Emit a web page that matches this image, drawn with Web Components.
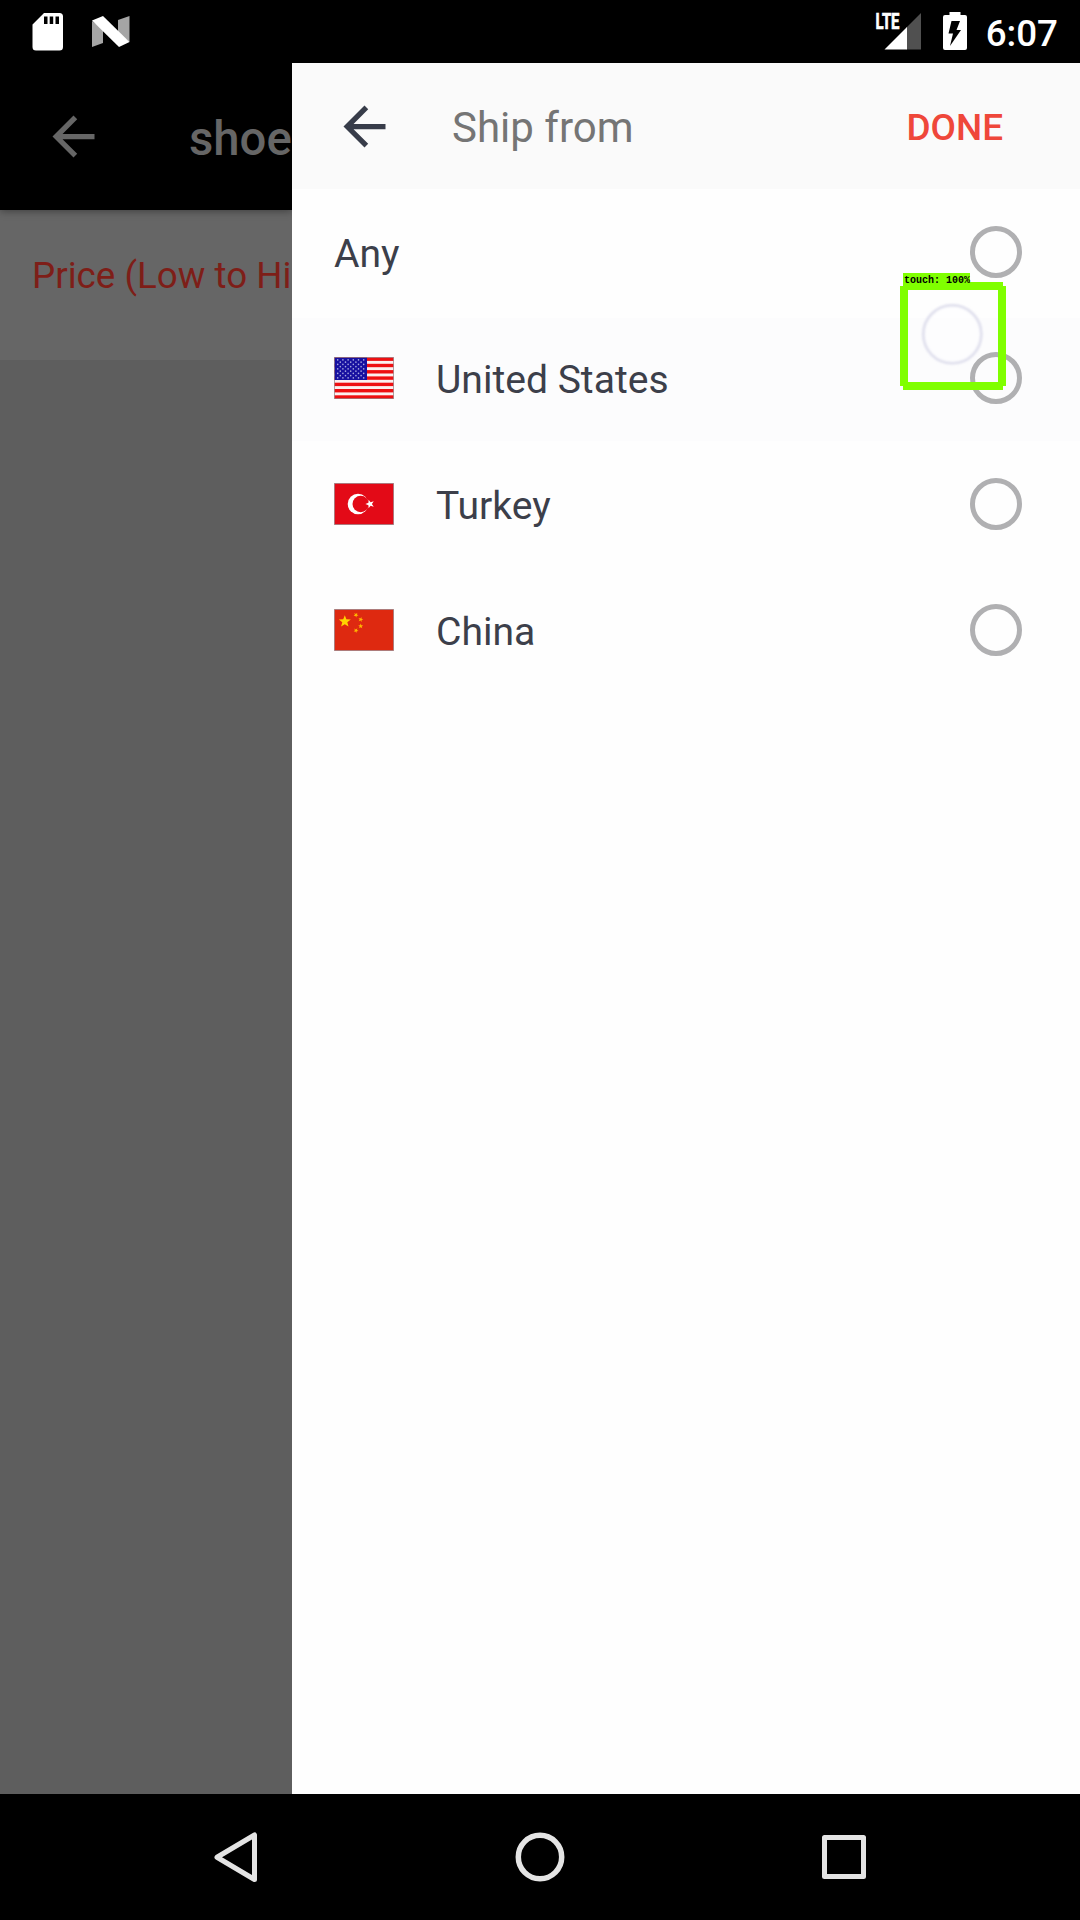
<!DOCTYPE html>
<html lang="en">
<head>
<meta charset="utf-8">
<title>Ship from</title>
<style>
html,body{margin:0;padding:0;background:#000}
body{font-family:Roboto,"Noto Sans",sans-serif;width:1080px;height:1920px;overflow:hidden}
</style>
</head>
<body>
<phone-screen></phone-screen>
<script>
const define = (name, css, html) => customElements.define(name, class extends HTMLElement {
  connectedCallback() {
    if (this.shadowRoot) return;
    const t = document.createElement('template');
    t.innerHTML = `<style>*{box-sizing:border-box}svg{display:block;flex:none}${css}</style>` +
      (typeof html === 'function' ? html(this) : html);
    this.attachShadow({mode: 'open'}).append(t.content.cloneNode(true));
  }
});

define('back-arrow', ':host{display:block;flex:none;width:63px;height:63px}',
  '<svg width="63" height="63" viewBox="0 0 24 24" fill="currentColor"><path d="M20 11H7.83l5.59-5.59L12 4l-8 8 8 8 1.41-1.41L7.83 13H20z"/></svg>');

define('status-bar', `
  :host{display:flex;height:63px;background:#000;color:#fff;padding:0 22px 0 32px;align-items:center}
  .right{margin-left:auto;display:flex;align-items:center}
  .sd{margin-right:29px}.sig{margin-right:22px}.bat{margin-right:19px}
  .time{font-size:36.75px;font-weight:500;line-height:43px;padding-top:3px}`, `
  <svg class="sd" width="31" height="63"><path fill="#fff" fill-rule="evenodd" d="M12 13h15.500q3.500 0 3.500 3.500V47q0 3.500-3.500 3.500H4Q.5 50.500.5 47V24.500zM12 16.500v7.500h3.500v-7.500zM17.700 16.500v7.500h3.500v-7.500zM23.500 16.500v7.500h3.500v-7.500z"/></svg>
  <svg width="38" height="63"><path fill="#a5a5a5" d="M0 21l11 8v14L0 47zM26 20l11.500-4v26L26 34z"/><path fill="#fff" d="M0 20.500L11 16l26.500 26L27 47z"/></svg>
  <div class="right">
    <svg class="sig" width="46" height="63"><path fill="#505050" d="M46 13v36.500H31.500V27.500z"/><path fill="#fff" d="M9.500 49.500L32 27v22.500z"/><path fill="#000" d="M0 10h24v19H0z"/><text x="0.500" y="29" textLength="24" lengthAdjust="spacingAndGlyphs" font-family="Roboto" font-weight="700" font-size="21.500" fill="#fff" stroke="#fff" stroke-width=".7">LTE</text></svg>
    <svg class="bat" width="24" height="63"><path fill="#fff" d="M6.500 12h11v3H22q2 0 2 2v31q0 2-2 2H2q-2 0-2-2V17q0-2 2-2h4.500z"/><path fill="#000" d="M8.500 21h8.500l-3.500 9H18L7 46l3-12.500H5.500z"/></svg>
    <span class="time">6:07</span>
  </div>`);

define('results-page', `
  :host{display:flex;flex-direction:column;width:292px;flex:none;overflow:hidden;background:#5e5e5e;white-space:nowrap}
  .bar{height:147px;background:#000;color:#666;display:flex;align-items:center;padding-left:42px;flex:none;z-index:1;box-shadow:0 1px 8px rgba(0,0,0,.4)}
  .title{font-size:47.250px;font-weight:500;line-height:56px;margin-left:84px;padding-top:4px}
  .sort{height:150px;background:#666;color:#7e1e18;font-size:36.750px;line-height:44px;padding:43.500px 0 0 32px;flex:none}`, `
  <div class="bar"><back-arrow></back-arrow><span class="title">shoe</span></div>
  <div class="sort">Price (Low to Hi</div>`);

const star = (cx, cy, r, rot = -90) => Array.from({length: 10}, (_, i) => {
  const a = (rot + i * 36) * Math.PI / 180, q = i % 2 ? r * .42 : r;
  return (cx + q * Math.cos(a)).toFixed(2) + ',' + (cy + q * Math.sin(a)).toFixed(2);
}).join(' ');

const flags = {
  us: () => {
    let s = '<rect width="59" height="41" fill="#fbf0f0"/>';
    for (let i = 0; i < 7; i++) s += `<rect y="${(i * 6.3).toFixed(1)}" width="59" height="3.4" fill="#ee0f12"/>`;
    s += '<rect width="32.500" height="22.500" fill="#1710a0"/>';
    for (let r = 0; r < 9; r++) for (let c = 0; c < (r % 2 ? 5 : 6); c++)
      s += `<circle cx="${3.2 + c * 5.2 + (r % 2 ? 2.6 : 0)}" cy="${2.4 + r * 2.25}" r=".8" fill="#a9a9e0"/>`;
    return s;
  },
  tr: () => `<rect width="59" height="41" fill="#e30a17"/><circle cx="23.500" cy="20.500" r="10.300" fill="#fff"/><circle cx="26.200" cy="20.500" r="8.200" fill="#e30a17"/><polygon points="${star(35.5, 20.5, 4.6, 180)}" fill="#fff"/>`,
  cn: () => `<rect width="59" height="41" fill="#de2910"/><polygon points="${star(10.3, 12, 6.3)}" fill="#ffd400"/>` +
    [[21.5, 5.5, -60], [26.2, 10, -75], [26.2, 16.700, -90], [21.5, 21, -60]].map(a => `<polygon points="${star(a[0], a[1], 2.6, a[2])}" fill="#ffb800"/>`).join('')
};
define('country-flag', ':host{display:block;flex:none;width:60px;height:42px;margin-right:42px}',
  el => `<svg width="60" height="42"><g transform="translate(.5 .5)">${flags[el.getAttribute('code')]()}<rect width="59" height="41" fill="none" stroke="#8a7074" stroke-opacity=".65"/></g></svg>`);

define('radio-ring', ':host{display:block;flex:none;width:52px;height:52px;border:5px solid #b0b0b2;border-radius:50%;box-sizing:border-box}', '');

define('country-row', `
  :host{display:flex;align-items:center;height:126px;padding:0 58px 0 42px;color:#3c3f4a;font-size:39.1px}
  :host([pressed]){background:linear-gradient(#fefefe 3px,#fcfcfd 3px)}
  .name{flex:1;line-height:46px;padding-top:3px}`,
  el => `${el.hasAttribute('flag') ? `<country-flag code="${el.getAttribute('flag')}"></country-flag>` : ''}<span class="name"><slot></slot></span><radio-ring></radio-ring>`);

define('filter-drawer', `
  :host{display:flex;flex-direction:column;flex:1;background:#fefefe;color:#3a3f4a}
  header{display:flex;align-items:center;height:126px;background:#fafafa;padding:0 77px 0 41px}
  back-arrow{color:#373c49}
  .title{font-size:42px;line-height:50px;color:#757575;margin-left:56px;padding-top:3px;flex:1}
  .done{font-size:36.900px;line-height:44px;font-weight:500;color:#ef473a;padding-top:3px}`, `
  <header><back-arrow></back-arrow><span class="title">Ship from</span><span class="done">DONE</span></header>
  <country-row>Any</country-row>
  <country-row flag="us" pressed>United States</country-row>
  <country-row flag="tr">Turkey</country-row>
  <country-row flag="cn">China</country-row>`);

define('nav-bar', `
  :host{display:flex;height:126px;background:#000;justify-content:center;align-items:center;gap:248px}`, `
  <svg width="56" height="56" fill="none" stroke="#e4e4e4" stroke-width="5" stroke-linejoin="round"><path d="M46.500 6v44.500L9 28.250z"/></svg>
  <svg width="56" height="56" fill="none" stroke="#e4e4e4" stroke-width="5.500"><circle cx="28" cy="28" r="21.700"/></svg>
  <svg width="56" height="56" fill="none" stroke="#e4e4e4" stroke-width="5" stroke-linejoin="round"><path d="M8.500 8.500h39v39h-39z"/></svg>`);

define('touch-marker', `
  :host{position:absolute;left:900px;top:273px;width:106px;height:117px}
  svg{position:absolute;left:0;top:0}
  .label{position:absolute;left:3px;top:0;width:67px;height:12px;background:#80ff00;color:#000;font:bold 10px/15px "Liberation Mono",monospace;padding-left:1px;white-space:pre}`, `
  <svg width="106" height="117"><defs><filter id="s" x="-30%" y="-30%" width="160%" height="160%"><feGaussianBlur stdDeviation="1"/></filter></defs>
  <circle cx="52.300" cy="61.300" r="29" fill="#fdfdff" fill-opacity=".5" stroke="#dedeec" stroke-width="2.600" filter="url(#s)"/>
  <path fill="#80ff00" fill-rule="evenodd" d="M3 9h100v4h3v100h-3v4H3v-4H0V13h3zM8 17v92h90V17z"/></svg>
  <span class="label">touch: 100%</span>`);

define('phone-screen', `
  :host{display:flex;flex-direction:column;width:1080px;height:1920px;position:relative;background:#000}
  main{display:flex;flex:1;min-height:0}`, `
  <status-bar></status-bar>
  <main><results-page></results-page><filter-drawer></filter-drawer></main>
  <nav-bar></nav-bar>
  <touch-marker></touch-marker>`);
</script>
</body>
</html>
